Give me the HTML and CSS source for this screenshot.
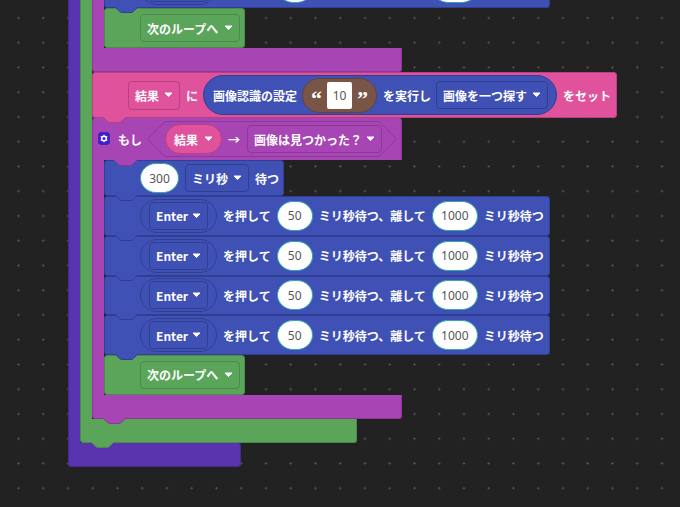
FILE: index.html
```html
<!DOCTYPE html>
<html lang="ja">
<head>
<meta charset="utf-8">
<title>ブロック</title>
<link rel="stylesheet" href="styles.css">
</head>
<body>
<svg class="defs" width="0" height="0" aria-hidden="true">
  <defs>
    <path id="tabshape" d="M0 0 L4.8 4.6 Q5.6 5.5 7 5.5 L16 5.5 Q17.4 5.5 18.2 4.6 L23 0"/>
    <path id="caret" d="M1 1 L8 1 L4.5 4.6 Z"/>
  </defs>
</svg>
<main class="canvas">
  <div class="cblock violet">
    <div class="cbody"><div class="arm"></div>
      <div class="inner">
        <div class="cblock green">
          <div class="cbody"><div class="arm"></div>
            <div class="inner">

              <div class="cblock magenta">
                <div class="cbody"><div class="arm"></div>
                  <div class="inner">
                    <div class="block blue row">
                      <span class="pill-outline"><span class="drop">Enter <svg class="arrow" viewBox="0 0 9 6"><use href="#caret"/></svg></span></span>
                      <span class="label first">を押して</span><span class="num n50">50</span>
                      <span class="label">ミリ秒待つ、離して</span><span class="num n1000">1000</span>
                      <span class="label">ミリ秒待つ</span>
                      <svg class="tab t-blue" viewBox="0 0 23 7"><use href="#tabshape"/></svg>
                    </div>
                    <div class="block green row short">
                      <span class="drop next">次のループへ <svg class="arrow" viewBox="0 0 9 6"><use href="#caret"/></svg></span>
                    </div>
                  </div>
                </div>
                <div class="foot f-magenta"></div>
              </div>

              <div class="block pink setter">
                <span class="drop var">結果 <svg class="arrow" viewBox="0 0 9 6"><use href="#caret"/></svg></span>
                <span class="label">に</span>
                <span class="call">
                  <span class="label">画像認識の設定</span>
                  <span class="quote"><span class="qm">“</span><span class="textbox">10</span><span class="qm">”</span></span>
                  <span class="label">を実行し</span>
                  <span class="drop mode">画像を一つ探す <svg class="arrow" viewBox="0 0 9 6"><use href="#caret"/></svg></span>
                </span>
                <span class="label">をセット</span>
                <svg class="tab t-pink" viewBox="0 0 23 7"><use href="#tabshape"/></svg>
              </div>

              <div class="cblock magenta">
                <div class="head">
                  <svg class="gear" viewBox="0 0 12 13">
                    <rect x="0.5" y="0.5" width="11" height="12" rx="2.5"/>
                    <circle class="gear-ring" cx="6" cy="6.5" r="2.3"/>
                    <path class="gear-teeth" d="M6 2.7V4M6 9V10.3M2.7 4.6L3.9 5.3M8.1 7.7L9.3 8.4M2.7 8.4L3.9 7.7M8.1 5.3L9.3 4.6"/>
                  </svg>
                  <span class="label if">もし</span>
                  <span class="hex">
                    <svg class="hex-line" viewBox="0 0 250 36" preserveAspectRatio="none">
                      <path d="M0.5 18 L18 0.5 L232 0.5 L249.5 18 L232 35.5 L18 35.5 Z"/>
                    </svg>
                    <span class="varpill">結果 <svg class="arrow" viewBox="0 0 9 6"><use href="#caret"/></svg></span>
                    <span class="label arrow-text">→</span>
                    <span class="drop found">画像は見つかった？ <svg class="arrow" viewBox="0 0 9 6"><use href="#caret"/></svg></span>
                  </span>
                  <svg class="tab t-magenta-h" viewBox="0 0 23 7"><use href="#tabshape"/></svg>
                </div>
                <div class="cbody"><div class="arm"></div>
                  <div class="inner">
                    <div class="block blue wait">
                      <span class="num n300">300</span>
                      <span class="drop unit">ミリ秒 <svg class="arrow" viewBox="0 0 9 6"><use href="#caret"/></svg></span>
                      <span class="label">待つ</span>
                      <svg class="tab t-blue" viewBox="0 0 23 7"><use href="#tabshape"/></svg>
                    </div>
                    <div class="block blue row">
                      <span class="pill-outline"><span class="drop">Enter <svg class="arrow" viewBox="0 0 9 6"><use href="#caret"/></svg></span></span>
                      <span class="label first">を押して</span><span class="num n50">50</span>
                      <span class="label">ミリ秒待つ、離して</span><span class="num n1000">1000</span>
                      <span class="label">ミリ秒待つ</span>
                      <svg class="tab t-blue" viewBox="0 0 23 7"><use href="#tabshape"/></svg>
                    </div>
                    <div class="block blue row">
                      <span class="pill-outline"><span class="drop">Enter <svg class="arrow" viewBox="0 0 9 6"><use href="#caret"/></svg></span></span>
                      <span class="label first">を押して</span><span class="num n50">50</span>
                      <span class="label">ミリ秒待つ、離して</span><span class="num n1000">1000</span>
                      <span class="label">ミリ秒待つ</span>
                      <svg class="tab t-blue" viewBox="0 0 23 7"><use href="#tabshape"/></svg>
                    </div>
                    <div class="block blue row">
                      <span class="pill-outline"><span class="drop">Enter <svg class="arrow" viewBox="0 0 9 6"><use href="#caret"/></svg></span></span>
                      <span class="label first">を押して</span><span class="num n50">50</span>
                      <span class="label">ミリ秒待つ、離して</span><span class="num n1000">1000</span>
                      <span class="label">ミリ秒待つ</span>
                      <svg class="tab t-blue" viewBox="0 0 23 7"><use href="#tabshape"/></svg>
                    </div>
                    <div class="block blue row">
                      <span class="pill-outline"><span class="drop">Enter <svg class="arrow" viewBox="0 0 9 6"><use href="#caret"/></svg></span></span>
                      <span class="label first">を押して</span><span class="num n50">50</span>
                      <span class="label">ミリ秒待つ、離して</span><span class="num n1000">1000</span>
                      <span class="label">ミリ秒待つ</span>
                      <svg class="tab t-blue" viewBox="0 0 23 7"><use href="#tabshape"/></svg>
                    </div>
                    <div class="block green row short">
                      <span class="drop next">次のループへ <svg class="arrow" viewBox="0 0 9 6"><use href="#caret"/></svg></span>
                    </div>
                  </div>
                </div>
                <div class="foot f-magenta">
                  <svg class="tab t-magenta" viewBox="0 0 23 7"><use href="#tabshape"/></svg>
                </div>
              </div>

            </div>
          </div>
          <div class="foot f-green">
            <svg class="tab t-green" viewBox="0 0 23 7"><use href="#tabshape"/></svg>
          </div>
        </div>
      </div>
    </div>
    <div class="foot f-violet"></div>
  </div>
</main>
</body>
</html>
```
FILE: styles.css
```css
* { box-sizing: border-box; }

html, body {
  margin: 0;
  height: 100%;
  overflow: hidden;
  background: #222;
}

.defs { position: absolute; }

.canvas {
  width: 680px;
  height: 507px;
  overflow: hidden;
  padding-left: 68px;
  background-color: #222;
  background-image: radial-gradient(circle at center, #5a5a5a 0, #5a5a5a 0.8px, transparent 1.3px);
  background-size: 24.75px 24.75px;
  background-position: 6.1px 5.6px;
  font-family: "Noto Sans CJK JP", "Noto Sans", sans-serif;
  font-size: 12px;
  font-weight: 700;
  color: #fff;
}

.violet { --c: #5a34ae; --d: #49298f; }
.green { --c: #5ba55b; --d: #4a8a4a; }
.magenta { --c: #a845b5; --d: #8b3896; }
.pink { --c: #e0529c; --d: #b83f80; }
.blue { --c: #3f51b5; --d: #303f92; }

.cblock {
  display: flex;
  flex-direction: column;
}

.violet.cblock { margin-top: -31.45px; }

.cbody { display: flex; }

.arm {
  flex: none;
  width: 12px;
  background: var(--c);
  box-shadow: inset 1px 0 var(--d);
}

.inner {
  display: flex;
  flex-direction: column;
  flex: 1;
  min-width: 0;
}

.foot {
  position: relative;
  height: 24px;
  background: var(--c);
  border: 1px solid var(--d);
  border-top: 0;
  border-radius: 0 0 3px 3px;
}

.f-violet { width: 173px; border-radius: 0 3px 3px 3px; }
.f-green { width: 277px; }
.f-magenta { width: 310px; }

.block {
  position: relative;
  display: flex;
  align-items: center;
  background: var(--c);
  border: 1px solid var(--d);
  border-radius: 3px;
}

.row {
  width: 446px;
  height: 39.75px;
  padding-left: 35px;
}

.short { width: 141px; }

.wait {
  width: 180px;
  height: 36px;
  gap: 6px;
  padding-left: 35px;
}

.setter {
  width: 525px;
  height: 46px;
  gap: 6px;
  padding-left: 35px;
}

.head {
  position: relative;
  display: flex;
  align-items: center;
  width: 310px;
  height: 42px;
  padding-left: 5px;
  background: var(--c);
  border: 1px solid var(--d);
  border-width: 0 1px 0 1px;
  border-radius: 3px 3px 0 0;
}

.label { white-space: nowrap; }
.first { margin-left: 6px; margin-right: 6px; }
.row .num + .label { margin: 0 6px; }

.drop {
  display: inline-flex;
  align-items: center;
  justify-content: space-between;
  height: 28px;
  padding: 0 6px;
  border: 1px solid var(--d);
  border-radius: 4px;
  white-space: nowrap;
}

.next { width: 100px; }
.var { width: 52px; height: 29px; }
.unit { width: 64px; }
.mode { width: 112px; }
.found { width: 135px; margin-left: 7px; }
.pill-outline .drop { width: 59px; }

.arrow {
  flex: none;
  width: 9px;
  height: 6px;
  margin-left: 3px;
  fill: #fff;
  stroke: #fff;
  stroke-width: 1;
  stroke-linejoin: round;
}

.pill-outline {
  display: inline-flex;
  align-items: center;
  justify-content: center;
  width: 77px;
  height: 34px;
  border: 1px solid var(--d);
  border-radius: 17px;
  flex: none;
}

.num {
  flex: none;
  display: inline-flex;
  align-items: center;
  justify-content: center;
  height: 30px;
  border: 1px solid #35a5b0;
  border-radius: 16px / 15px;
  background: #fff;
  color: #555;
  font-family: "Noto Sans", sans-serif;
  font-weight: 400;
}

.n50 { width: 36px; }
.n300 { width: 39px; }
.n1000 { width: 46px; }

.call {
  display: flex;
  align-items: center;
  gap: 5px;
  width: 354px;
  height: 40px;
  margin-left: -1px;
  padding-left: 9px;
  background: #3f51b5;
  border: 1px solid #303f92;
  border-radius: 20px;
  --d: #303f92;
}

.quote {
  display: flex;
  align-items: center;
  justify-content: space-between;
  width: 75px;
  height: 35px;
  margin-right: 1px;
  padding: 0 8px;
  background: #795548;
  border: 1px solid #614439;
  border-radius: 18px;
}

.qm {
  font-family: "Liberation Serif", serif;
  font-size: 22px;
  line-height: 1;
  height: 14px;
}

.textbox {
  display: flex;
  align-items: center;
  justify-content: center;
  width: 25px;
  height: 27px;
  background: #fff;
  border-radius: 2px;
  color: #555;
  font-family: "Noto Sans", sans-serif;
  font-weight: 400;
}

.if { margin-left: 8px; }

.gear { flex: none; width: 12px; height: 13px; margin-top: -2px; }
.gear rect { fill: #3d1fd6; stroke: #2a148f; stroke-width: 0.5; }
.gear-ring { fill: none; stroke: #fff; stroke-width: 1.4; }
.gear-teeth { fill: none; stroke: #fff; stroke-width: 1.1; }

.hex {
  position: relative;
  display: flex;
  align-items: center;
  width: 250px;
  height: 36px;
  margin-left: 5px;
  padding-left: 18px;
}

.hex-line {
  position: absolute;
  top: 0;
  left: 0;
  width: 100%;
  height: 100%;
  fill: none;
  stroke: var(--d);
  stroke-width: 1;
}

.varpill {
  position: relative;
  display: inline-flex;
  align-items: center;
  justify-content: space-between;
  width: 57px;
  height: 30px;
  padding: 0 8px;
  background: #e0529c;
  border: 1px solid #b83f80;
  border-radius: 15px;
  white-space: nowrap;
}

.arrow-text { position: relative; margin-left: 6px; }
.found { position: relative; }

.tab {
  position: absolute;
  z-index: 2;
  width: 23px;
  height: 7px;
  top: 100%;
  fill: var(--c);
  stroke: var(--d);
  stroke-width: 1;
  overflow: visible;
}

.t-blue { left: 10px; }
.t-pink { left: 10px; }
.t-magenta-h { left: 21px; }
.t-magenta { left: 10px; }
.t-green { left: 10px; }
```
